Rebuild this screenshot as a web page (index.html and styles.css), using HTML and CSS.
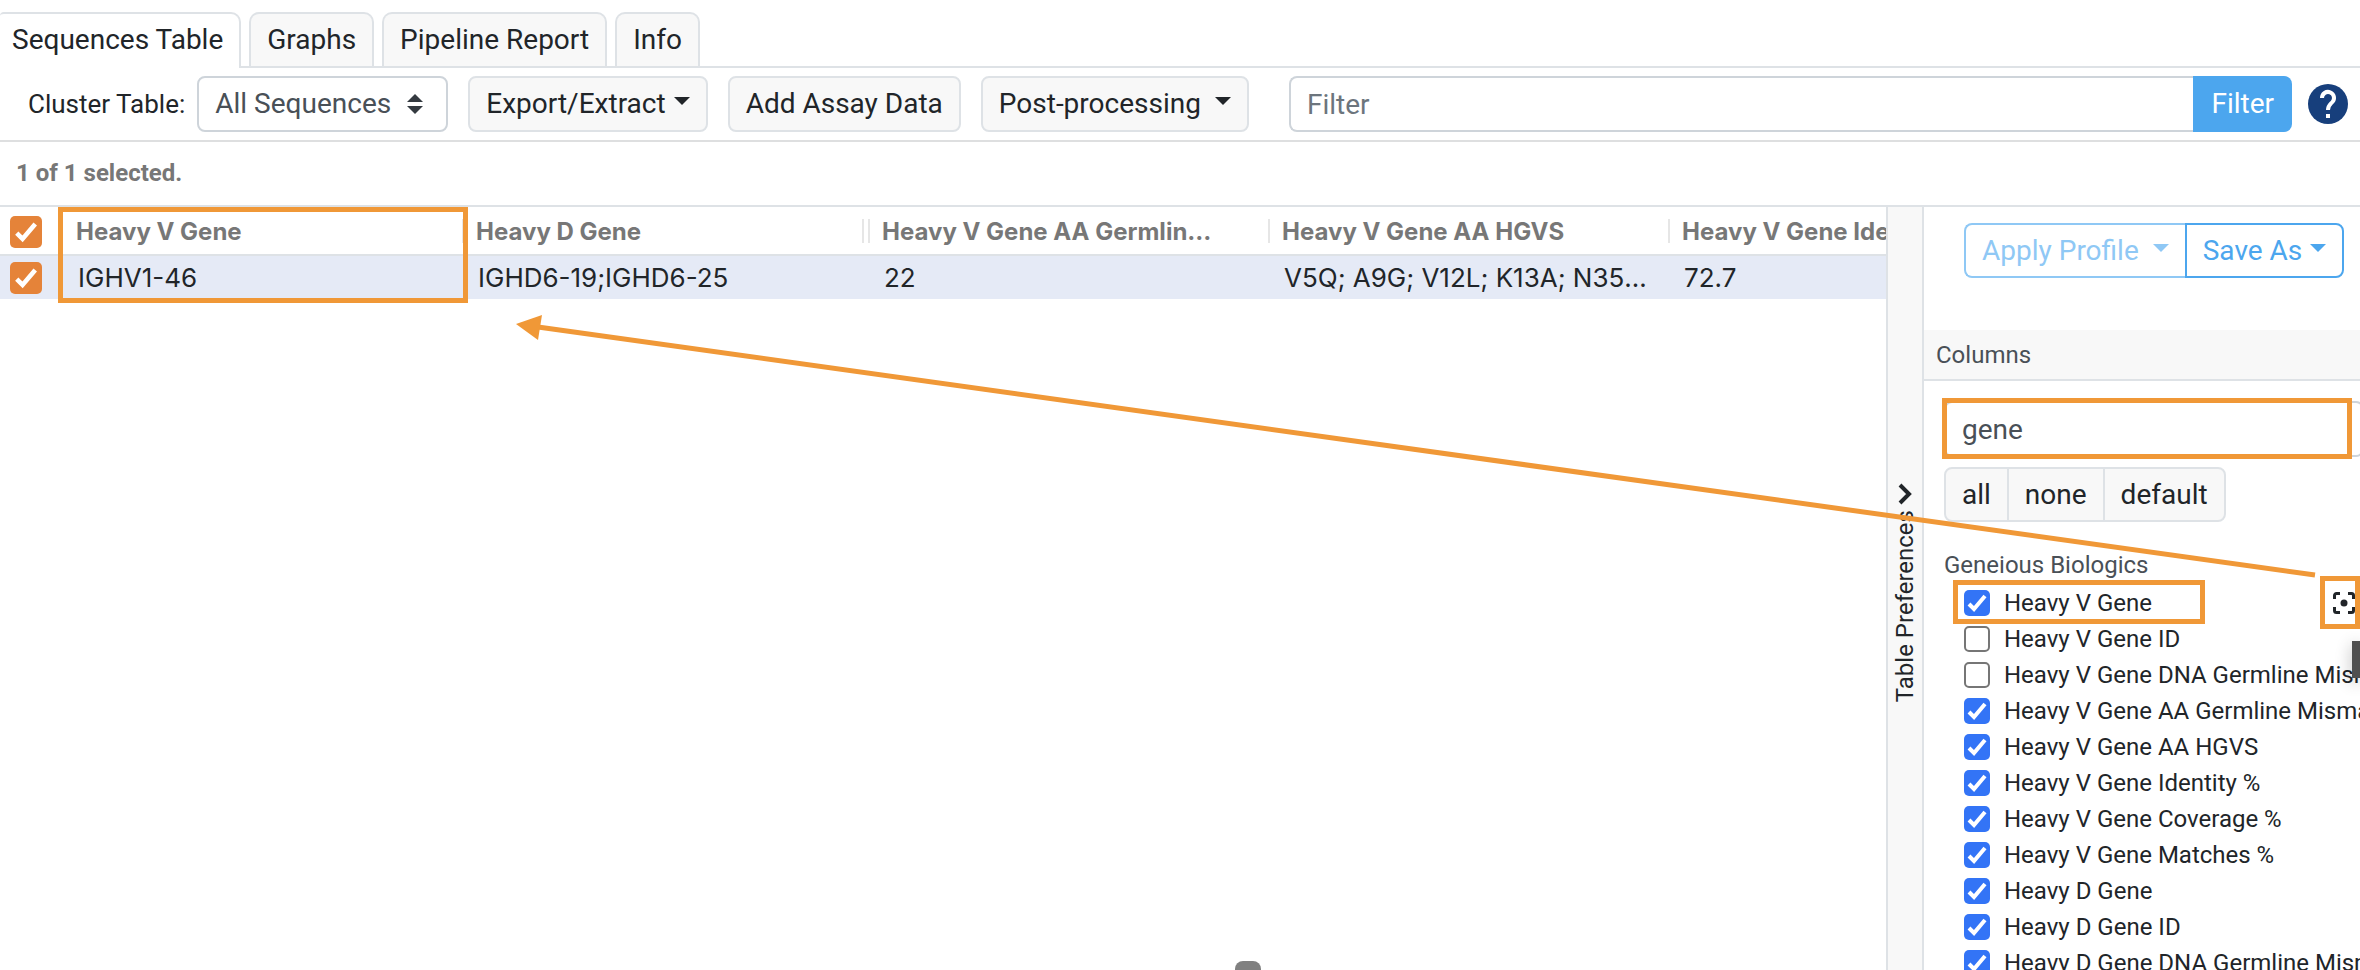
FILE: index.html
```html
<!DOCTYPE html>
<html lang="en">
<head>
<meta charset="utf-8">
<title>Sequences Table</title>
<link rel="stylesheet" href="styles.css">
</head>
<body>
<div class="app">
  <nav class="tabs" aria-label="Views">
    <a class="tab tab-active" href="#">Sequences Table</a>
    <a class="tab" href="#">Graphs</a>
    <a class="tab" href="#">Pipeline Report</a>
    <a class="tab" href="#">Info</a>
  </nav>

  <div class="toolbar">
    <label class="toolbar-label" for="cluster">Cluster Table:</label>
    <div class="select-wrap">
      <select class="select" id="cluster"><option>All Sequences</option></select>
      <svg class="select-arrows" viewBox="0 0 16 20" aria-hidden="true"><path d="M8 0l8 8H0zM0 12h16l-8 8z"/></svg>
    </div>
    <button class="btn" type="button">Export/Extract<span class="caret"></span></button>
    <button class="btn" type="button">Add Assay Data</button>
    <button class="btn btn-spaced" type="button">Post-processing<span class="caret"></span></button>
    <form class="filter">
      <input class="filter-input" type="text" placeholder="Filter" aria-label="Filter">
      <button class="filter-btn" type="button">Filter</button>
    </form>
    <button class="help" type="button" aria-label="Help">
      <svg class="help-icon" viewBox="0 0 40 40" aria-hidden="true"><circle cx="20" cy="20" r="20" fill="#173f7c"/><path d="M14 14a6 6 0 1 1 10.400 4C22 20.500 20 21.500 20 26" fill="none" stroke="#fff" stroke-width="4"/><path d="M18 30h4v4h-4z" fill="#fff"/></svg>
    </button>
  </div>

  <p class="status">1 of 1 selected.</p>

  <div class="workspace">
    <main class="grid-pane">
      <table class="grid">
        <colgroup><col class="col-check"><col class="col"><col class="col col-wide"><col class="col"><col class="col"><col class="col"></colgroup>
        <thead>
          <tr>
            <th class="cell-check"><input class="check check-orange" type="checkbox" checked aria-label="Select all"></th>
            <th>Heavy V Gene</th>
            <th class="ruled double">Heavy D Gene</th>
            <th class="ruled">Heavy V Gene AA Germline Mismatches</th>
            <th class="ruled">Heavy V Gene AA HGVS</th>
            <th class="ruled">Heavy V Gene Identity %</th>
          </tr>
        </thead>
        <tbody>
          <tr>
            <td class="cell-check"><input class="check check-orange" type="checkbox" checked aria-label="Select row"></td>
            <td>IGHV1-46</td>
            <td>IGHD6-19;IGHD6-25</td>
            <td>22</td>
            <td>V5Q; A9G; V12L; K13A; N35S; M48I</td>
            <td>72.7</td>
          </tr>
        </tbody>
      </table>
      <span class="mark mark-column"></span>
      <span class="drag-handle"></span>
    </main>

    <button class="rail" type="button">
      <svg class="rail-icon" viewBox="0 0 14 22" aria-hidden="true"><path d="M2 2l9 9-9 9" fill="none" stroke="#212529" stroke-width="4"/></svg>
      <span class="rail-text">Table Preferences</span>
    </button>

    <aside class="prefs">
      <div class="profile">
        <button class="outline-btn outline-first" type="button" disabled>Apply Profile<span class="caret"></span></button>
        <button class="outline-btn outline-last" type="button">Save As<span class="caret"></span></button>
      </div>
      <h2 class="prefs-title">Columns</h2>
      <div class="prefs-body">
        <div class="search">
          <input class="search-input" type="text" value="gene" aria-label="Search columns">
          <span class="mark mark-search"></span>
        </div>
        <div class="presets">
          <button class="preset" type="button">all</button>
          <button class="preset" type="button">none</button>
          <button class="preset" type="button">default</button>
        </div>
        <h3 class="group-title">Geneious Biologics</h3>
        <ul class="columns">
          <li class="column"><label class="column-label"><input class="check" type="checkbox" checked>Heavy V Gene</label><span class="mark mark-item"></span></li>
          <li class="column"><label class="column-label"><input class="check" type="checkbox">Heavy V Gene ID</label></li>
          <li class="column"><label class="column-label"><input class="check" type="checkbox">Heavy V Gene DNA Germline Mismatches</label></li>
          <li class="column"><label class="column-label"><input class="check" type="checkbox" checked>Heavy V Gene AA Germline Mismatches</label></li>
          <li class="column"><label class="column-label"><input class="check" type="checkbox" checked>Heavy V Gene AA HGVS</label></li>
          <li class="column"><label class="column-label"><input class="check" type="checkbox" checked>Heavy V Gene Identity %</label></li>
          <li class="column"><label class="column-label"><input class="check" type="checkbox" checked>Heavy V Gene Coverage %</label></li>
          <li class="column"><label class="column-label"><input class="check" type="checkbox" checked>Heavy V Gene Matches %</label></li>
          <li class="column"><label class="column-label"><input class="check" type="checkbox" checked>Heavy D Gene</label></li>
          <li class="column"><label class="column-label"><input class="check" type="checkbox" checked>Heavy D Gene ID</label></li>
          <li class="column"><label class="column-label"><input class="check" type="checkbox" checked>Heavy D Gene DNA Germline Mismatches</label></li>
        </ul>
      </div>
      <button class="focus-btn" type="button" aria-label="Scroll to column">
        <svg class="focus-icon" viewBox="0 0 22 22" aria-hidden="true"><path d="M1.500 7V3.500a2 2 0 0 1 2-2H7M15 1.500h3.500a2 2 0 0 1 2 2V7M20.500 15v3.500a2 2 0 0 1-2 2H15M7 20.500H3.500a2 2 0 0 1-2-2V15" fill="none" stroke="#212529" stroke-width="3"/><circle cx="11" cy="11" r="3.500" fill="#212529"/></svg>
      </button>
      <span class="tooltip"></span>
    </aside>
    <svg class="arrow" viewBox="0 0 1846 272" aria-hidden="true"><path d="M1801 253L24 5" fill="none" stroke="#f09837" stroke-width="5"/><path d="M2 2L28-7 24 18z" fill="#f09837"/></svg>
  </div>
</div>
</body>
</html>
```
FILE: styles.css
```css
* { box-sizing: border-box; }
body {
  margin: 0;
  background: #fff;
  color: #212529;
  font-family: Roboto, "Liberation Sans", sans-serif;
  font-size: 28px;
  line-height: 40px;
}
button, input, select { font: inherit; color: inherit; margin: 0; }
.app { display: flex; flex-direction: column; height: 100vh; overflow: hidden; }

.tabs {
  display: flex;
  gap: 8px;
  padding-top: 12px;
  border-bottom: 2px solid #dee2e6;
}
.tab {
  padding: 6px 16px;
  border: 2px solid #dee2e6;
  border-bottom: 0;
  border-radius: 10px 10px 0 0;
  background: #f8f8f8;
  color: #212529;
  text-decoration: none;
}
.tab-active {
  margin-bottom: -2px;
  padding-left: 12px;
  border-left: 0;
  border-top-left-radius: 4px;
  background: #fff;
}

.toolbar {
  display: flex;
  align-items: center;
  gap: 20px;
  padding: 8px 12px 8px 28px;
  border-bottom: 2px solid #dedfe0;
}
.toolbar-label { margin-right: -8px; font-size: 26px; }
.select-wrap { position: relative; }
.select {
  display: block;
  appearance: none;
  width: 251px;
  height: 56px;
  padding: 0 16px;
  border: 2px solid #ced4da;
  border-radius: 8px;
  background: #fff;
  color: #495057;
}
.select-arrows {
  position: absolute;
  top: 18px;
  right: 25px;
  width: 16px;
  height: 20px;
  fill: #343a40;
  pointer-events: none;
}
.btn {
  height: 56px;
  padding: 0 16px;
  border: 2px solid #dee2e6;
  border-radius: 8px;
  background: #f8f8f8;
  white-space: nowrap;
}
.btn-spaced { margin-right: 20px; }
.btn-spaced .caret { margin-left: 14px; }
.caret {
  display: inline-block;
  margin-left: 8px;
  border: 8px solid transparent;
  border-top-color: currentColor;
  border-bottom: 0;
  vertical-align: 8px;
}
.filter { display: flex; flex: 1; }
.filter-input {
  flex: 1;
  min-width: 0;
  height: 56px;
  padding: 0 16px;
  border: 2px solid #ced4da;
  border-right: 0;
  border-radius: 8px 0 0 8px;
}
.filter-input::placeholder { color: #6c757d; opacity: 1; }
.filter-btn {
  padding: 0 18px;
  border: 0;
  border-radius: 0 8px 8px 0;
  background: #4ca6ee;
  color: #fff;
}
.help { display: flex; margin-left: -4px; padding: 0; border: 0; background: none; }
.help-icon { width: 40px; height: 40px; }

.status {
  margin: 0;
  padding: 11px 16px 12px;
  color: #777;
  font-size: 24px;
  font-weight: 700;
}

.workspace {
  position: relative;
  display: flex;
  flex: 1;
  min-height: 0;
  border-top: 2px solid #dee2e6;
}
.grid-pane { position: relative; flex: 1; min-width: 0; overflow: hidden; }
.grid { width: 2066px; table-layout: fixed; border-collapse: collapse; font-family: Inter, Roboto, sans-serif; }
.col-check { width: 60px; }
.col { width: 400px; }
.col-wide { width: 406px; }
.grid th, .grid td {
  padding: 0 10px 0 16px;
  overflow: hidden;
  text-align: left;
  text-overflow: ellipsis;
  white-space: nowrap;
}
.grid th {
  height: 48px;
  padding-top: 2px;
  padding-right: 46px;
  border-bottom: 2px solid #dee2e6;
  color: #777;
  font-size: 24px;
  font-weight: 700;
}
.grid td { height: 44px; padding-left: 18px; background: #e5eaf6; font-size: 26px; }
.grid .cell-check { padding-right: 10px; padding-left: 10px; line-height: 0; }
.ruled {
  background: linear-gradient(#e6e6e6, #e6e6e6) left 2px center / 2px 24px no-repeat;
}
.double {
  background: linear-gradient(#e6e6e6, #e6e6e6) left 2px center / 2px 24px no-repeat, linear-gradient(#e6e6e6, #e6e6e6) right 2px center / 2px 24px no-repeat;
}

.check {
  appearance: none;
  flex: none;
  width: 26px;
  height: 26px;
  border: 2px solid #767676;
  border-radius: 5px;
  background: #fff;
}
.check:checked {
  border: 0;
  background: #3374f6 url("data:image/svg+xml,%3Csvg xmlns='http://www.w3.org/2000/svg' viewBox='0 0 26 26'%3E%3Cpath d='M5 14l5 5L21 6' fill='none' stroke='white' stroke-width='4'/%3E%3C/svg%3E") center / 100% no-repeat;
}
.check-orange { width: 32px; height: 32px; }
.check-orange:checked { background-color: #e58339; background-size: 30px; }

.rail {
  display: flex;
  flex-direction: column;
  align-items: center;
  justify-content: center;
  gap: 5px;
  width: 38px;
  padding: 8px 0 0;
  border: solid #dee2e6;
  border-width: 0 2px;
  background: #f8f8f8;
  font-size: 24px;
}
.rail-icon { width: 14px; height: 22px; }
.rail-text { writing-mode: vertical-rl; line-height: 34px; transform: rotate(180deg); }

.prefs { position: relative; width: 436px; overflow: hidden; }
.profile { display: flex; padding: 16px 16px 52px 40px; }
.outline-btn {
  height: 55px;
  padding: 0 16px;
  border: 2px solid #4ca6ee;
  background: #fff;
  color: #4ca6ee;
  white-space: nowrap;
}
.outline-first { flex: 1; border-color: #8fc8f5; border-right: 0; border-radius: 8px 0 0 8px; color: #8fc8f5; }
.outline-first .caret { margin-left: 14px; }
.outline-last { border-radius: 0 8px 8px 0; }
.prefs-title {
  margin: 0;
  padding: 5px 12px 4px;
  border-bottom: 2px solid #dee2e6;
  background: #f8f8f8;
  color: #495057;
  font-size: 24px;
  font-weight: 400;
}
.prefs-body { padding: 20px 0 0 20px; }
.search { position: relative; margin-right: -4px; }
.search-input {
  display: block;
  width: 100%;
  height: 56px;
  padding: 0 16px;
  border: 2px solid #ced4da;
  border-radius: 8px;
  color: #495057;
}
.presets { display: flex; margin-top: 10px; }
.preset {
  height: 55px;
  margin-right: -2px;
  padding: 0 16px;
  border: 2px solid #dee2e6;
  background: #f8f8f8;
}
.preset:first-child { border-radius: 8px 0 0 8px; }
.preset:last-child { border-radius: 0 8px 8px 0; }
.group-title { margin: 23px 0 0; color: #495057; font-size: 24px; font-weight: 400; }
.columns { margin: 0; padding: 0 0 0 20px; list-style: none; font-size: 24px; line-height: 36px; }
.column { position: relative; white-space: nowrap; }
.column-label { display: flex; align-items: center; gap: 14px; }

/* Callouts drawn over the interface */
.mark { position: absolute; border: 5px solid #f09837; pointer-events: none; }
.mark-column { top: 0; left: 58px; width: 410px; height: 96px; }
.mark-search { top: -3px; left: -2px; width: 410px; height: 61px; }
.mark-item { top: -5px; left: -11px; width: 252px; height: 44px; }
.arrow { position: absolute; top: 115px; right: 0; width: 1846px; height: 272px; overflow: visible; pointer-events: none; }
.focus-btn {
  position: absolute;
  top: 369px;
  right: 0;
  display: flex;
  align-items: center;
  width: 40px;
  height: 53px;
  padding: 0 0 0 8px;
  border: 5px solid #f09837;
  background: #fff;
}
.focus-icon { flex: none; width: 22px; height: 22px; }
.tooltip {
  position: absolute;
  top: 434px;
  right: 0;
  width: 8px;
  height: 37px;
  background: #505050;
  box-shadow: 0 4px 16px rgba(0, 0, 0, 0.3);
}
.drag-handle {
  position: absolute;
  bottom: 0;
  left: 1235px;
  width: 26px;
  height: 9px;
  border-radius: 8px 8px 0 0;
  background: #808080;
}
```
